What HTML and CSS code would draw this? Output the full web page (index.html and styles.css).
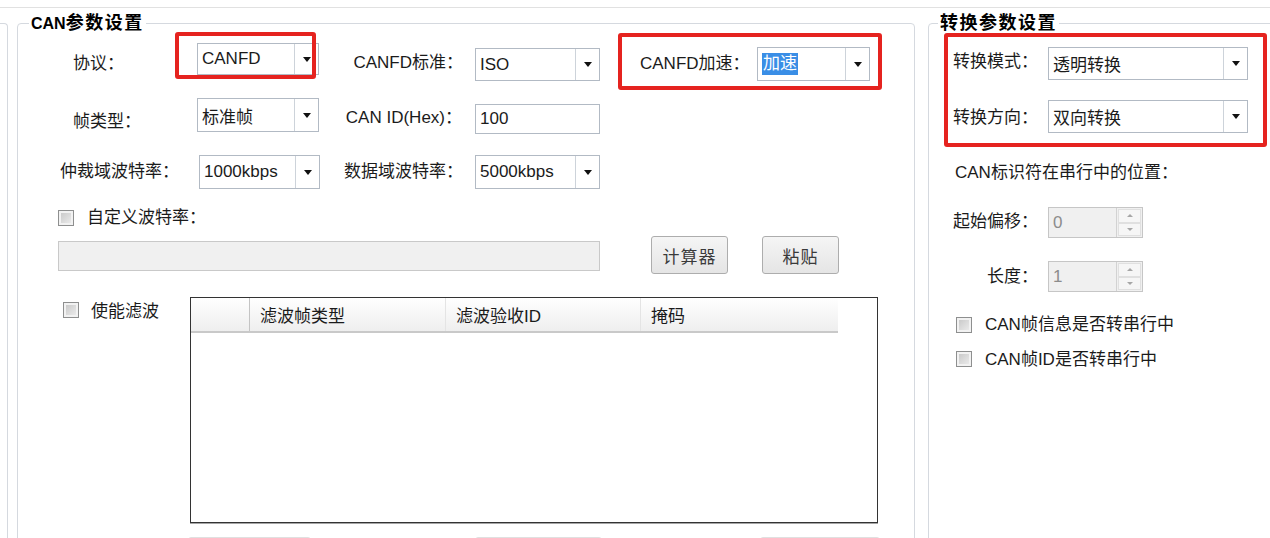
FILE: index.html
```html
<!DOCTYPE html>
<html lang="zh-CN">
<head>
<meta charset="utf-8">
<title>CAN参数设置</title>
<link rel="stylesheet" href="styles.css">
</head>
<body>
<div class="page">
  <div class="topbar"></div>
  <div class="groups">
    <div class="stub"></div>

    <section class="group group-can">
      <div class="group-title"><span class="latin">CAN</span>参数设置</div>

      <div class="row can-a">
        <span class="lbl lbl-first">协议：</span>
        <div class="combo combo-proto"><span class="val">CANFD</span><span class="drop"></span></div>
        <span class="lbl lbl-mid">CANFD标准：</span>
        <div class="combo combo-iso"><span class="val">ISO</span><span class="drop"></span></div>
        <span class="lbl lbl-acc">CANFD加速：</span>
        <div class="combo combo-acc"><span class="val"><span class="sel">加速</span></span><span class="drop"></span></div>
      </div>

      <div class="row can-b">
        <span class="lbl lbl-first">帧类型：</span>
        <div class="combo combo-frame"><span class="val">标准帧</span><span class="drop"></span></div>
        <span class="lbl lbl-mid lbl-id">CAN ID(Hex)：</span>
        <div class="textbox tb-id">100</div>
      </div>

      <div class="row can-c">
        <span class="lbl lbl-rate">仲裁域波特率：</span>
        <div class="combo combo-rate"><span class="val">1000kbps</span><span class="drop"></span></div>
        <span class="lbl lbl-mid lbl-drate">数据域波特率：</span>
        <div class="combo combo-drate"><span class="val">5000kbps</span><span class="drop"></span></div>
      </div>

      <div class="row can-d">
        <span class="chk chk-custom"></span>
        <span class="lbl lbl-custom">自定义波特率：</span>
      </div>

      <div class="row can-e">
        <div class="textbox disabled tb-custom"></div>
        <div class="btn btn-calc">计算器</div>
        <div class="btn btn-paste">粘贴</div>
      </div>

      <div class="row can-f">
        <div class="filter-toggle">
          <span class="chk chk-filter"></span>
          <span class="lbl lbl-filter">使能滤波</span>
        </div>
        <div class="grid">
          <div class="grid-head">
            <div class="hc-corner"></div>
            <div class="hc hc-1">滤波帧类型</div>
            <div class="hc hc-2">滤波验收ID</div>
            <div class="hc hc-3">掩码</div>
          </div>
        </div>
      </div>

      <div class="row can-g">
        <div class="btn btn-low btn-low-1"></div>
        <div class="btn btn-low btn-low-2"></div>
        <div class="btn btn-low btn-low-3"></div>
      </div>
    </section>

    <section class="group group-conv">
      <div class="group-title group-title-conv">转换参数设置</div>

      <div class="row cv-a">
        <span class="lbl lbl-cv">转换模式：</span>
        <div class="combo combo-cv"><span class="val">透明转换</span><span class="drop"></span></div>
      </div>

      <div class="row cv-b">
        <span class="lbl lbl-cv">转换方向：</span>
        <div class="combo combo-cv"><span class="val">双向转换</span><span class="drop"></span></div>
      </div>

      <div class="row cv-c">
        <span class="lbl lbl-pos">CAN标识符在串行中的位置：</span>
      </div>

      <div class="row cv-d">
        <span class="lbl lbl-cv">起始偏移：</span>
        <div class="spin"><span class="val">0</span><span class="spin-btns"><span class="up"></span><span class="down"></span></span></div>
      </div>

      <div class="row cv-e">
        <span class="lbl lbl-cv">长度：</span>
        <div class="spin"><span class="val">1</span><span class="spin-btns"><span class="up"></span><span class="down"></span></span></div>
      </div>

      <div class="row cv-f">
        <span class="chk chk-cv"></span>
        <span class="lbl lbl-chk">CAN帧信息是否转串行中</span>
      </div>

      <div class="row cv-g">
        <span class="chk chk-cv"></span>
        <span class="lbl lbl-chk">CAN帧ID是否转串行中</span>
      </div>
    </section>
  </div>

  <div class="mark mark-proto"></div>
  <div class="mark mark-acc"></div>
  <div class="mark mark-conv"></div>
</div>
</body>
</html>
```

FILE: styles.css
```css
* { box-sizing: border-box; }

html, body {
  margin: 0;
  padding: 0;
  height: 538px;
  overflow: hidden;
  background: #fff;
}

body {
  font-family: "Liberation Sans", "Noto Sans CJK SC", sans-serif;
  font-size: 17px;
  color: #1b1b1b;
}

.page {
  position: relative;
  width: 1270px;
  height: 538px;
  overflow: hidden;
}

.topbar {
  height: 8px;
  border-bottom: 1px solid #e1e1e1;
}

.groups {
  display: flex;
  align-items: flex-start;
  padding-top: 15px;
}

.groups > *,
.row > *,
.filter-toggle > * {
  flex-shrink: 0;
}

.stub {
  width: 8px;
  height: 600px;
  border-top: 1px solid #d5d9df;
  border-right: 1px solid #d5d9df;
  border-top-right-radius: 4px;
}

.group {
  border: 1px solid #d5d9df;
  border-radius: 4px;
  height: 600px;
}

.group-can {
  margin-left: 9px;
  width: 898px;
}

.group-conv {
  margin-left: 13px;
  width: 360px;
}

.group-title {
  width: max-content;
  margin: -10px 0 0 11px;
  padding: 0 2px;
  background: #fff;
  font-size: 18px;
  font-weight: bold;
  line-height: 18px;
  letter-spacing: 1.5px;
  color: #000;
}

.group-title .latin {
  font-size: 16px;
  letter-spacing: 0;
}

.group-title-conv {
  margin-left: 9px;
}

.row {
  display: flex;
  align-items: flex-start;
}

.lbl {
  line-height: 20px;
  white-space: nowrap;
}

/* combo boxes */
.combo {
  display: flex;
  border: 1px solid #b2bac4;
  background: #fff;
}

.combo .val {
  flex: 1;
  display: flex;
  align-items: center;
  padding-left: 4px;
  white-space: nowrap;
}

.combo .drop {
  width: 24px;
  border-left: 1px solid #cdd3da;
  display: flex;
  align-items: center;
  justify-content: center;
}

.combo .drop::before {
  content: "";
  border-left: 4px solid transparent;
  border-right: 4px solid transparent;
  border-top: 5px solid #111;
}

.sel {
  background: #3a8ee6;
  color: #fff;
  line-height: 22px;
  padding: 0 1px;
}

.textbox {
  display: flex;
  align-items: center;
  border: 1px solid #b2bac4;
  background: #fff;
  padding-left: 4px;
}

.textbox.disabled {
  background: #f0f0f0;
  border-color: #c9c9c9;
}

.btn {
  display: flex;
  align-items: center;
  justify-content: center;
  border: 1px solid #adadad;
  border-radius: 3px;
  background: linear-gradient(#f5f5f5, #e5e5e5);
  color: #3a3a3a;
  letter-spacing: 1px;
}

.chk {
  width: 16px;
  height: 16px;
  border: 1px solid #8e8f8f;
  background: linear-gradient(135deg, #c4c4c4, #f0f0f0);
  box-shadow: inset 0 0 0 2px #f2f2f2;
}

/* CAN group rows */
.can-a { height: 56px; }
.can-b { height: 56px; }
.can-c { height: 53px; }
.can-d { height: 35px; }
.can-e { height: 52px; }
.can-f { height: 246px; }
.can-g { height: 40px; }

.lbl-first {
  width: 124px;
  margin-left: 55px;
}

.can-a .lbl-first { margin-top: 21px; }
.can-b .lbl-first { margin-top: 23px; }

.lbl-mid {
  width: 156px;
  text-align: right;
  padding-right: 12px;
}

.can-a .lbl-mid { margin-top: 20px; }
.lbl-id { margin-top: 19px; padding-right: 13px; }

.lbl-acc {
  width: 157px;
  padding-left: 40px;
  margin-top: 21px;
}

.combo-proto { width: 122px; height: 32px; margin-top: 10px; }
.combo-iso { width: 125px; height: 33px; margin-top: 15px; }
.combo-acc { width: 113px; height: 34px; margin-top: 14px; }
.combo-frame { width: 122px; height: 34px; margin-top: 9px; }
.tb-id { width: 125px; height: 30px; margin-top: 15px; }

.lbl-rate {
  width: 139px;
  margin-left: 42px;
  margin-top: 17px;
}

.combo-rate { width: 121px; height: 34px; margin-top: 10px; }
.lbl-drate { width: 155px; margin-top: 17px; }
.combo-drate { width: 125px; height: 34px; margin-top: 10px; }

.chk-custom { margin-left: 40px; margin-top: 12px; }
.lbl-custom { margin-left: 13px; margin-top: 10px; }

.tb-custom { width: 542px; height: 30px; margin-left: 40px; margin-top: 8px; }
.btn-calc { width: 77px; height: 38px; margin-left: 51px; margin-top: 3px; }
.btn-paste { width: 77px; height: 38px; margin-left: 34px; margin-top: 3px; }

.filter-toggle {
  width: 172px;
  display: flex;
  align-items: flex-start;
}

.chk-filter { margin-left: 45px; margin-top: 17px; }
.lbl-filter { margin-left: 12px; margin-top: 17px; }

.grid {
  width: 688px;
  height: 226px;
  margin-top: 12px;
  border: 1px solid #333;
  box-shadow: 0 1px 0 #a5a5a5;
  background: #fff;
}

.grid-head {
  display: flex;
  width: 647px;
  height: 35px;
  border-bottom: 2px solid #c9c9c9;
  background: linear-gradient(#ffffff, #eeeeee);
}

.hc-corner {
  width: 59px;
  border-right: 1px solid #c4c4c4;
}

.hc {
  display: flex;
  align-items: center;
  padding-left: 10px;
  border-right: 1px solid #e4e4e4;
  white-space: nowrap;
}

.hc-1 { width: 196px; }
.hc-2 { width: 195px; }
.hc-3 { width: 197px; border-right: none; }

.btn-low { height: 30px; margin-top: 6px; background: #efefef; border-color: #e0e0e0; }
.btn-low-1 { width: 123px; margin-left: 170px; }
.btn-low-2 { width: 127px; margin-left: 164px; }
.btn-low-3 { width: 120px; margin-left: 158px; }

/* conversion group rows */
.cv-a { height: 56px; }
.cv-b { height: 56px; }
.cv-c { height: 53px; }
.cv-d { height: 53px; }
.cv-e { height: 50px; }
.cv-f { height: 40px; }
.cv-g { height: 40px; }

.lbl-cv {
  width: 119px;
  text-align: right;
  padding-right: 10px;
}

.cv-a .lbl-cv { margin-top: 20px; }
.cv-b .lbl-cv { margin-top: 20px; }
.cv-d .lbl-cv { margin-top: 15px; }
.cv-e .lbl-cv { margin-top: 17px; }

.combo-cv { width: 200px; height: 33px; }
.cv-a .combo-cv { margin-top: 15px; }
.cv-b .combo-cv { margin-top: 12px; }

.lbl-pos { margin-left: 26px; margin-top: 19px; }

.spin {
  display: flex;
  width: 95px;
  height: 31px;
  border: 1px solid #c6c6c6;
  background: #f0f0f0;
}

.cv-d .spin { margin-top: 10px; }
.cv-e .spin { margin-top: 11px; }

.spin .val {
  flex: 1;
  display: flex;
  align-items: center;
  padding-left: 4px;
  color: #8c8c8c;
}

.spin-btns {
  width: 26px;
  display: flex;
  flex-direction: column;
  border-left: 1px solid #d2d2d2;
  padding: 1px;
}

.spin-btns .up,
.spin-btns .down {
  flex: 1;
  display: flex;
  align-items: center;
  justify-content: center;
  background: #f6f6f6;
  border: 1px solid #e0e0e0;
}

.spin-btns .up::before {
  content: "";
  border-left: 3px solid transparent;
  border-right: 3px solid transparent;
  border-bottom: 3px solid #a6a6a6;
}

.spin-btns .down::before {
  content: "";
  border-left: 3px solid transparent;
  border-right: 3px solid transparent;
  border-top: 3px solid #a6a6a6;
}

.chk-cv { margin-left: 27px; }
.cv-f .chk-cv { margin-top: 17px; }
.cv-g .chk-cv { margin-top: 11px; }

.lbl-chk { margin-left: 13px; }
.cv-f .lbl-chk { margin-top: 15px; }
.cv-g .lbl-chk { margin-top: 10px; }

/* red annotation frames */
.mark {
  position: absolute;
  border: 4px solid #e5231f;
  border-radius: 3px;
}

.mark-proto { left: 175px; top: 32px; width: 141px; height: 47px; }
.mark-acc { left: 618px; top: 33px; width: 264px; height: 57px; }
.mark-conv { left: 944px; top: 33px; width: 323px; height: 114px; }
```
